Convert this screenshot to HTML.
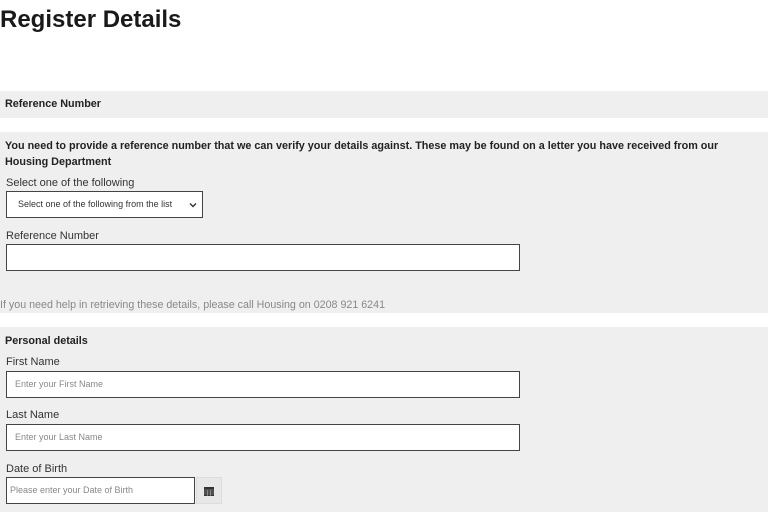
<!DOCTYPE html>
<html><head><style>
*{margin:0;padding:0;box-sizing:border-box}
body{width:768px;height:512px;overflow:hidden;background:#fff;font-family:"Liberation Sans",Arial,sans-serif;color:#222;position:relative}
.a{position:absolute}
.band{position:absolute;left:0;width:768px;background:#efefef}
h1{position:absolute;left:0;top:6px;font-size:24px;font-weight:bold;color:#1a1a1a}
.b{font-weight:bold;font-size:10.8px;color:#222}
.l{font-size:11px;color:#333}
.in{position:absolute;background:#fff;border:1px solid #444;font-size:9px;color:#888;padding-left:8px;line-height:25px}
</style></head><body>
<h1>Register Details</h1>
<div class="band" style="top:91px;height:27px"></div>
<div class="a b" style="left:5px;top:98px">Reference Number</div>
<div class="band" style="top:132px;height:181px"></div>
<div class="a b" style="left:5px;top:138px;width:740px;line-height:16px">You need to provide a reference number that we can verify your details against. These may be found on a letter you have received from our Housing Department</div>
<div class="a l" style="left:6px;top:177px">Select one of the following</div>
<div class="in" style="left:6px;top:191px;width:197px;height:27px;color:#333;padding-left:11px">Select one of the following from the list
<svg class="a" style="right:5px;top:10px" width="8" height="6" viewBox="0 0 8 6"><path d="M1 1.5l3 3 3-3" stroke="#333" stroke-width="1.4" fill="none"/></svg></div>
<div class="a l" style="left:6px;top:230px">Reference Number</div>
<div class="in" style="left:6px;top:244px;width:514px;height:27px"></div>
<div class="a" style="left:0;top:299px;font-size:10.7px;color:#888">If you need help in retrieving these details, please call Housing on 0208 921 6241</div>
<div class="band" style="top:327px;height:185px"></div>
<div class="a b" style="left:5px;top:335px">Personal details</div>
<div class="a l" style="left:6px;top:356px">First Name</div>
<div class="in" style="left:6px;top:371px;width:514px;height:27px">Enter your First Name</div>
<div class="a l" style="left:6px;top:409px">Last Name</div>
<div class="in" style="left:6px;top:424px;width:514px;height:27px">Enter your Last Name</div>
<div class="a l" style="left:6px;top:463px">Date of Birth</div>
<div class="in" style="left:6px;top:477px;width:189px;height:27px;padding-left:3px">Please enter your Date of Birth</div>
<div class="a" style="left:196px;top:477px;width:26px;height:27px;background:#e8e8e8;border:1px solid #ddd">
<svg class="a" style="left:7px;top:9px" width="10" height="9" viewBox="0 0 10 9"><rect x="0" y="0" width="10" height="9" fill="#333"/><path d="M0 3h10M0 5h10M0 7h10M3.3 3v6M6.6 3v6" stroke="#aaa" stroke-width="0.6"/></svg>
</div>
</body></html>
